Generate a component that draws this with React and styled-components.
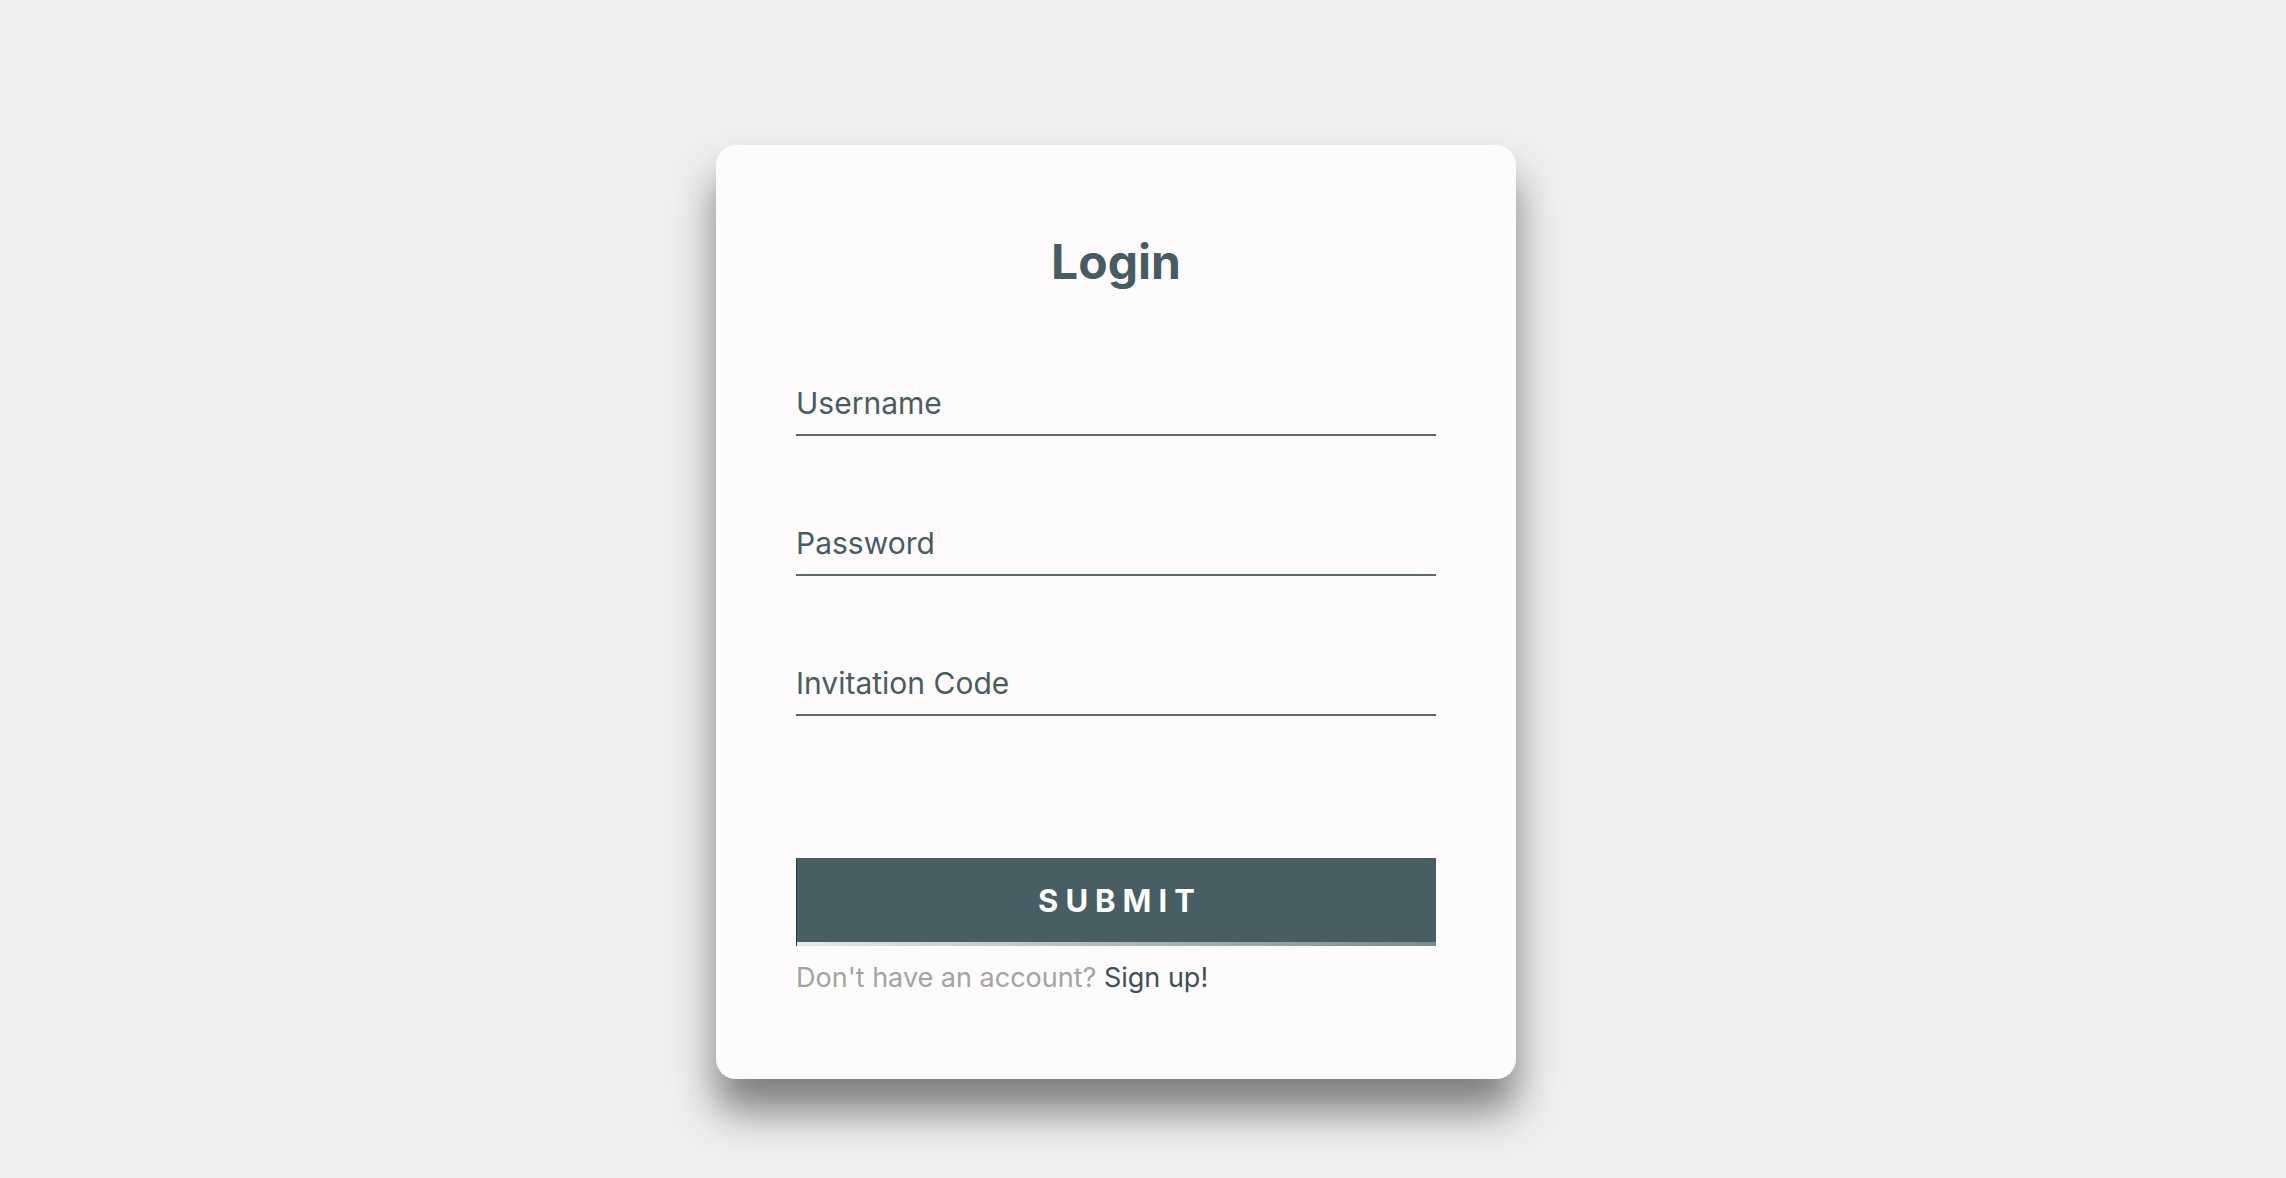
import styled, { createGlobalStyle } from "styled-components";

const GlobalStyle = createGlobalStyle`
  html, body {
    margin: 0;
    padding: 0;
    background-color: #efefef;
    font-family: Inter, "Noto Sans", "Liberation Sans", sans-serif;
  }
`;

const Page = styled.div`
  display: flex;
  justify-content: center;
  min-height: 100vh;
  box-sizing: border-box;
  padding: 145px 54px 0 0;
`;

const Card = styled.form`
  display: flex;
  flex-direction: column;
  width: 800px;
  height: 934px;
  box-sizing: border-box;
  padding: 90px 80px 0;
  background-color: #fdfbfc;
  border-radius: 20px;
  box-shadow: 0 32px 42px rgba(0, 0, 0, 0.48);
`;

const Title = styled.h1`
  margin: 0 0 96px;
  font-size: 48px;
  line-height: 54px;
  font-weight: 700;
  text-align: center;
  color: #465b62;
`;

const Fields = styled.div`
  display: flex;
  flex-direction: column;
  gap: 89px;
`;

const Input = styled.input`
  display: block;
  width: 100%;
  box-sizing: content-box;
  height: 36px;
  padding: 0 0 13px;
  margin: 0;
  border: none;
  border-bottom: 2px solid #5d696e;
  background: transparent;
  font-family: inherit;
  font-size: 30px;
  line-height: 36px;
  color: #4a5c62;
  outline: none;

  &::placeholder {
    color: #4a5c62;
    opacity: 1;
  }
`;

const SubmitButton = styled.button`
  margin-top: 142px;
  height: 88px;
  width: 100%;
  border: none;
  border-left: 1px solid #2f3d42;
  padding: 0 0 4px 7px;
  background:
    linear-gradient(to right, #e4e9eb, #7b8a8f) bottom / 100% 4px no-repeat,
    #475e65;
  color: #ffffff;
  font-family: inherit;
  font-size: 31px;
  font-weight: 700;
  letter-spacing: 7px;
  cursor: pointer;
`;

const Footer = styled.p`
  margin: 15px 0 0;
  font-size: 27px;
  line-height: 33px;
  color: #a3a3a3;
`;

const SignUpLink = styled.a`
  color: #3e5057;
  text-decoration: none;
`;

export default function App() {
  return (
    <>
      <GlobalStyle />
      <Page>
        <Card onSubmit={(e) => e.preventDefault()}>
          <Title>Login</Title>
          <Fields>
            <Input type="text" placeholder="Username" />
            <Input type="password" placeholder="Password" />
            <Input type="text" placeholder="Invitation Code" />
          </Fields>
          <SubmitButton type="submit">SUBMIT</SubmitButton>
          <Footer>
            Don't have an account? <SignUpLink href="#">Sign up!</SignUpLink>
          </Footer>
        </Card>
      </Page>
    </>
  );
}
